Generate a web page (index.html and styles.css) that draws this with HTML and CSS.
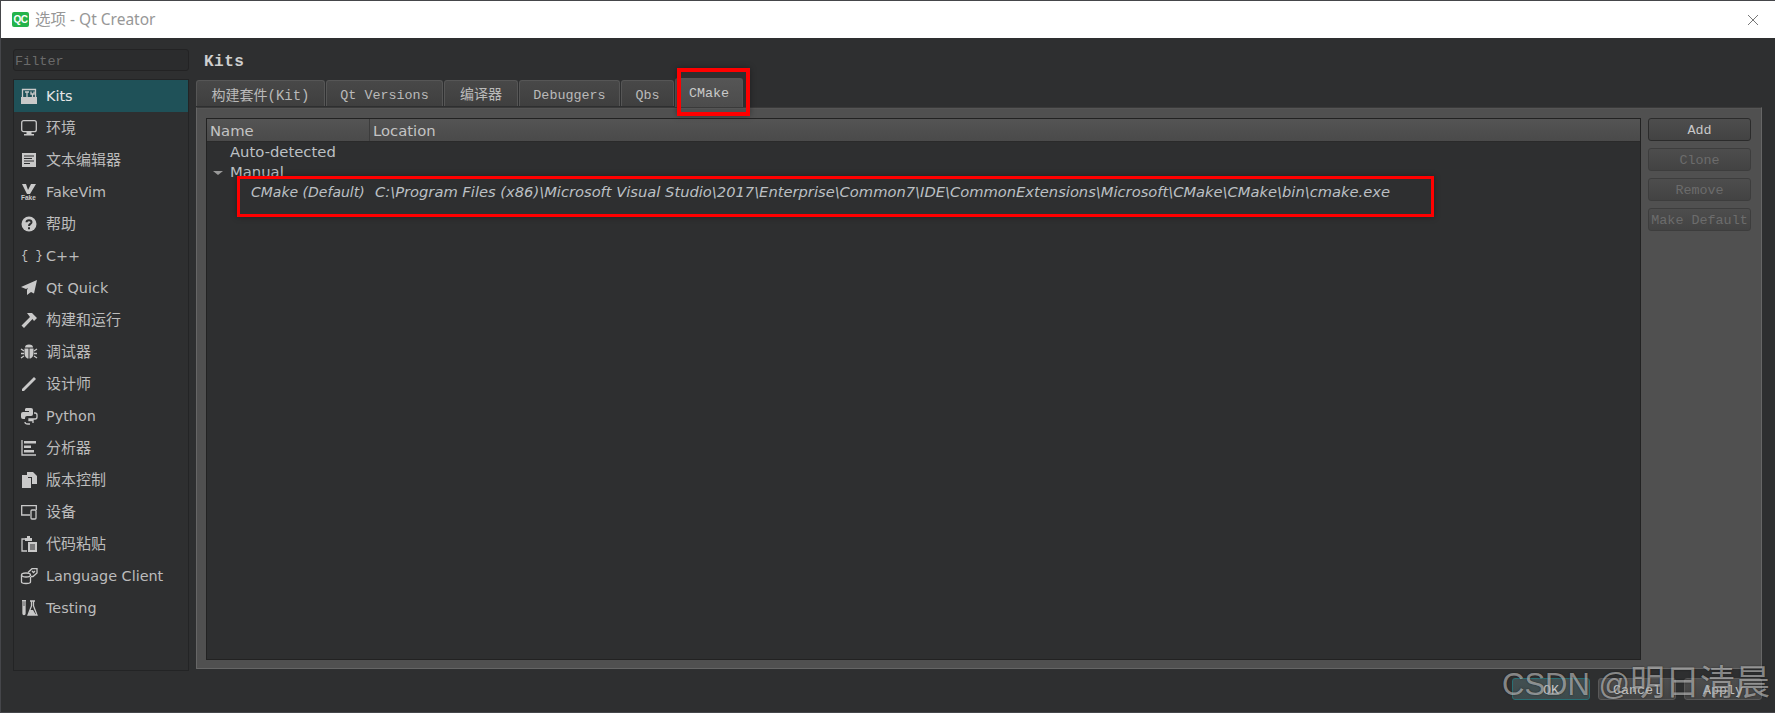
FILE: index.html
```html
<!DOCTYPE html>
<html lang="zh">
<head>
<meta charset="utf-8">
<title>选项 - Qt Creator</title>
<link rel="stylesheet" href="styles.css">
</head>
<body>
<div class="window">
  <header class="titlebar">
    <span class="logo">QC</span>
    <span class="title-text">选项 - Qt Creator</span>
    <svg class="close" viewBox="0 0 12 12"><path d="M1 1l10 10M11 1L1 11"/></svg>
  </header>
  <div class="content">
    <aside class="sidebar">
      <div class="filter">Filter</div>
      <nav class="nav">
        <div class="nav-item active"><svg class="ico" viewBox="0 0 16 16"><path class="fill" d="M0 9h16v7H0z"/><path class="line" d="M1.500 9V1.500h13V9M4 4h4M6 4v5M10 3.500v2.500h3V3.500M11.500 6v3"/></svg><span>Kits</span></div>
        <div class="nav-item zh"><svg class="ico" viewBox="0 0 16 16"><rect class="line" x=".7" y=".7" width="14.600" height="11" rx="2"/><path class="fill" d="M5.500 12h5v2H13v1.500H3V14h2.500z"/></svg><span>环境</span></div>
        <div class="nav-item zh"><svg class="ico" viewBox="0 0 16 16"><path class="fill" d="M1 1h14v14H1z"/><path class="cut" d="M3 4h10M3 6.500h8M3 9h10M3 11.500h6"/></svg><span>文本编辑器</span></div>
        <div class="nav-item"><svg class="ico" viewBox="0 0 16 16"><path class="fill" d="M1 0h4l2 6 3-6h5L9 10H6z"/><text class="fake" x="0" y="16">Fake</text></svg><span>FakeVim</span></div>
        <div class="nav-item zh"><svg class="ico" viewBox="0 0 16 16"><circle class="fill" cx="8" cy="8" r="7.500"/><path class="cut thick" d="M5.500 6.200C5.500 3.500 10.500 3.500 10.500 6.200 10.500 8 8 7.800 8 10"/><path class="cut thick" d="M8 11.200v2"/></svg><span>帮助</span></div>
        <div class="nav-item"><span class="braces">{ }</span><span>C++</span></div>
        <div class="nav-item"><svg class="ico" viewBox="0 0 16 16"><path class="fill" d="M16 0L0 7l5 2 2-1-1 2v5l4-3 3 1.500z"/></svg><span>Qt Quick</span></div>
        <div class="nav-item zh"><svg class="ico" viewBox="0 0 16 16"><path class="fill" d="M6 1h5l5 5-3 3-1.500-2L3 16l-2.500-2.500L9 5z"/></svg><span>构建和运行</span></div>
        <div class="nav-item zh"><svg class="ico" viewBox="0 0 16 16"><path class="fill" d="M4 3.500a4 3 0 0 1 8 0zM3.500 4.500h4v10C5 14.500 3.500 12 3.500 9zM8.500 4.500h4V9c0 3-1.500 5.500-4 5.500z"/><path class="line" d="M0 5l3 2M16 5l-3 2M0 9.500h3M16 9.500h-3M0 14l3-2M16 14l-3-2"/></svg><span>调试器</span></div>
        <div class="nav-item zh"><svg class="ico" viewBox="0 0 16 16"><path class="fill" d="M13 1l2 2L3 15H1v-2z"/></svg><span>设计师</span></div>
        <div class="nav-item"><svg class="ico" viewBox="0 0 16 16"><path class="fill" d="M5 0h5a2 2 0 0 1 2 2v4a2 2 0 0 1-2 2H6a2 2 0 0 0-2 2v1H2a2 2 0 0 1-2-2V6a2 2 0 0 1 2-2h6V3H4V1z"/><path class="line" d="M9 16H7q-3 0-3-2M13 5h1q2 0 2 2v2q0 2-2 2H8v1.500h4V15"/></svg><span>Python</span></div>
        <div class="nav-item zh"><svg class="ico" viewBox="0 0 16 16"><path class="line" d="M1 0v15h14"/><path class="fill" d="M3 1h12v2.500H3zM3 5.500h7V8H3zM3 10h10v2.500H3z"/></svg><span>分析器</span></div>
        <div class="nav-item zh"><svg class="ico" viewBox="0 0 16 16"><path class="fill" d="M1 3h6v3h3v10H1z"/><path class="fill" d="M6 0h6l4 4v8h-5V5H6z"/></svg><span>版本控制</span></div>
        <div class="nav-item zh"><svg class="ico" viewBox="0 0 16 16"><path class="line" d="M9 11H.7V1.700h14.600V6"/><rect class="line" x="10" y="6" width="5" height="9" rx="1"/></svg><span>设备</span></div>
        <div class="nav-item zh"><svg class="ico" viewBox="0 0 16 16"><path class="line" d="M5 3H1v12h5"/><path class="fill" d="M4 2h2V0h3v2h2v3H4z"/><path class="fill" d="M7 6h9v10H7z"/><path class="cut" d="M9 9h5M9 11h5M9 13h5"/></svg><span>代码粘贴</span></div>
        <div class="nav-item"><svg class="ico" viewBox="0 0 16 16"><ellipse class="line" cx="5" cy="7" rx="4.500" ry="2"/><path class="line" d="M.5 7v7c0 2 9 2 9 0V9"/><path class="line" d="M7 4.500L11 .7h5V5l-4 3.500H10"/><path class="line" d="M11 3l1.500 1.500L14 3"/></svg><span>Language Client</span></div>
        <div class="nav-item"><svg class="ico" viewBox="0 0 16 16"><path class="line" d="M1 .7h4M2 1v12.500a1 1 0 0 0 2 0V1"/><path class="fill" d="M2 6h2v8H2z"/><path class="line" d="M9 1h5M10.500 1v5L7 15h9l-3.500-9V1"/><path class="fill" d="M9 10h3l3 5H7.500z"/></svg><span>Testing</span></div>
      </nav>
    </aside>
    <main class="main">
      <h1 class="page-title">Kits</h1>
      <div class="tabs">
        <div class="tab tab-kit">构建套件(Kit)</div>
        <div class="tab tab-qt">Qt Versions</div>
        <div class="tab tab-comp">编译器</div>
        <div class="tab tab-dbg">Debuggers</div>
        <div class="tab tab-qbs">Qbs</div>
        <div class="tab tab-cmake selected">CMake</div>
      </div>
      <section class="panel">
        <div class="tree">
          <div class="tree-head">
            <div class="col-name">Name</div>
            <div class="col-loc">Location</div>
          </div>
          <div class="tree-row group">Auto-detected</div>
          <div class="tree-row group"><i class="arrow"></i>Manual</div>
          <div class="tree-row item"><em class="item-name">CMake (Default)</em><em>C:\Program Files (x86)\Microsoft Visual Studio\2017\Enterprise\Common7\IDE\CommonExtensions\Microsoft\CMake\CMake\bin\cmake.exe</em></div>
        </div>
        <div class="side-buttons">
          <button class="btn">Add</button>
          <button class="btn off">Clone</button>
          <button class="btn off">Remove</button>
          <button class="btn off">Make Default</button>
        </div>
      </section>
      <footer class="footer">
        <button class="btn foot default">OK</button>
        <button class="btn foot">Cancel</button>
        <button class="btn foot">Apply</button>
      </footer>
    </main>
  </div>
  <div class="mark mark-tab"></div>
  <div class="mark mark-row"></div>
  <div class="watermark">CSDN @<span class="watermark-zh">明日清晨</span></div>
</div>
</body>
</html>
```
FILE: styles.css
```css
* { box-sizing: border-box; }
html, body { margin: 0; height: 100%; overflow: hidden; background: #45464a; }
body { padding-top: 1px; }
.window {
  position: relative;
  width: 1775px;
  height: 711px;
  padding-left: 1px;
  display: flex;
  flex-direction: column;
  font-family: "DejaVu Sans", "Noto Sans CJK SC", sans-serif;
  background: #2e2f30;
  color: #bdbdbd;
  border-left: 1px solid #45464a;
}
.titlebar {
  height: 37px;
  margin-left: -1px;
  background: #fff;
  display: flex;
  align-items: center;
  padding-left: 11px;
  flex: none;
}
.logo {
  width: 17px;
  height: 15px;
  border-radius: 2px;
  background: #24b34b;
  color: #fff;
  font: bold 10px/15px "Liberation Sans", sans-serif;
  text-align: center;
  letter-spacing: -.5px;
}
.title-text {
  margin-left: 6px;
  margin-top: -2px;
  font-size: 15.500px;
  color: #979797;
  font-family: "Noto Sans", "Noto Sans CJK SC", sans-serif;
}
.close { width: 12px; height: 12px; margin-left: auto; margin-right: 16px; }
.close path { stroke: #777; stroke-width: 1; fill: none; }
.content {
  flex: 1;
  display: flex;
  gap: 7px;
  padding: 11px 13px 0 11px;
  min-height: 0;
}
.sidebar { width: 176px; flex: none; display: flex; flex-direction: column; gap: 8px; }
.filter {
  height: 22px;
  border: 1px solid #232324;
  border-radius: 3px;
  font: 13.500px/23px "Liberation Mono", monospace;
  color: #6a6a6a;
  padding-left: 1px;
  background: #2b2c2d;
}
.nav { height: 592px; border: 1px solid #232425; background: #2e2f30; }
.nav-item {
  height: 32px;
  display: flex;
  align-items: center;
  font-size: 14.400px;
  color: #bcbcbc;
  padding-left: 7px;
}
.nav-item.zh { font-size: 15px; }
.nav-item span:last-child { margin-left: 9px; }
.nav-item.zh span:last-child { margin-bottom: 4px; }
.nav-item.active { background: #1f5158; color: #e6e6e6; height: 32px; }
.ico { width: 16px; height: 16px; flex: none; overflow: visible; }
.fill { fill: #c9c9c9; }
.line { fill: none; stroke: #c9c9c9; stroke-width: 1.300; }
.cut { fill: none; stroke: #2e2f30; stroke-width: 1.200; }
.thick { stroke-width: 2; }
.fake { font: bold 6.500px "Liberation Sans", sans-serif; fill: #c9c9c9; }
.braces { width: 16px; flex: none; font: 12px/16px "Liberation Mono", monospace; color: #c4c4c4; white-space: pre; text-align: center; }
.main { flex: 1; min-width: 0; display: flex; flex-direction: column; }
.page-title {
  margin: 0;
  height: 30px;
  padding-left: 8px;
  font: bold 16px/26px "Liberation Mono", monospace;
  letter-spacing: .5px;
  color: #cfcfcf;
  flex: none;
}
.tabs { display: flex; height: 28px; align-items: flex-end; gap: 1px; flex: none; padding-bottom: 1px; }
.tab {
  height: 26px;
  border: 1px solid #565656;
  border-bottom: 0;
  border-radius: 3px 3px 0 0;
  background: linear-gradient(#484848, #3f3f3f);
  font: 13.400px/29px "Liberation Mono", "Noto Sans CJK SC", monospace;
  color: #bababa;
  text-align: center;
  flex: none;
}
.tab-kit { width: 129px; font-size: 14px; line-height: 30px; }
.tab-qt { width: 117px; }
.tab-comp { width: 74px; font-size: 14px; line-height: 29px; }
.tab-dbg { width: 101px; }
.tab-qbs { width: 53px; }
.tab-cmake { width: 68px; }
.tab.selected { height: 29px; margin-bottom: -1px; background: linear-gradient(#555, #4c4c4c); color: #cacaca; line-height: 30px; position: relative; z-index: 1; }
.panel {
  height: 562px;
  flex: none;
  background: #505050;
  border: 1px solid #666;
  border-top-color: #3a3a3a;
  padding: 10px 10px 8px 9px;
  display: flex;
  gap: 7px;
  box-shadow: inset 0 1px 0 #555;
}
.tree { flex: 1; min-width: 0; background: #2e2f30; border: 1px solid #222; font-size: 14.800px; }
.tree-head {
  height: 23px;
  display: flex;
  background: linear-gradient(#545454, #4a4a4a);
  border-bottom: 1px solid #2a2a2a;
  line-height: 23px;
  color: #c4c4c4;
}
.col-name { width: 163px; padding-left: 3px; border-right: 1px solid #3c3c3c; flex: none; }
.col-loc { padding-left: 3px; }
.tree-row { height: 20px; line-height: 20px; white-space: nowrap; color: #bcc0c4; }
.group { padding-left: 23px; position: relative; }
.arrow {
  position: absolute;
  left: 6px;
  top: 9px;
  border: 5px solid transparent;
  border-top: 4px solid #999;
  border-bottom: 0;
}
.item { padding-left: 44px; font-size: 14.700px; }
.item em { font-style: italic; }
.item-name { display: inline-block; width: 124px; font-size: 14px; }
.side-buttons { width: 103px; flex: none; display: flex; flex-direction: column; gap: 7px; }
.btn {
  height: 23px;
  padding: 0;
  border: 1px solid #2b2b2b;
  border-radius: 3px;
  background: linear-gradient(#4d4d4d, #434343);
  font: 13.400px/23px "Liberation Mono", monospace;
  color: #c8c8c8;
}
.btn.off { height: 23px; color: #6c6c6c; border-color: #3d3d3d; }
.footer { display: flex; justify-content: flex-end; gap: 8px; margin-top: 9px; }
.foot { width: 78px; height: 22px; border-color: #5a5a5a; }
.foot.default { border-color: #2a6f74; background: linear-gradient(#435052, #3d4a4c); }
.mark { position: absolute; border-style: solid; border-color: #f00; box-shadow: 0 0 6px rgba(0, 0, 0, .35); pointer-events: none; z-index: 3; }
.mark-tab { left: 676px; top: 67px; width: 73px; height: 48px; border-width: 4px; }
.mark-row { left: 236px; top: 175px; width: 1197px; height: 41px; border-width: 3px; }
.watermark {
  position: absolute;
  left: 1501px;
  top: 663px;
  font: 31px/38px "Liberation Sans", "Noto Sans CJK SC", sans-serif;
  color: rgba(255, 255, 255, .48);
  text-shadow: 0 0 2px rgba(0, 0, 0, .5);
  white-space: nowrap;
  z-index: 4;
}
.watermark-zh { font-size: 35px; }
```
